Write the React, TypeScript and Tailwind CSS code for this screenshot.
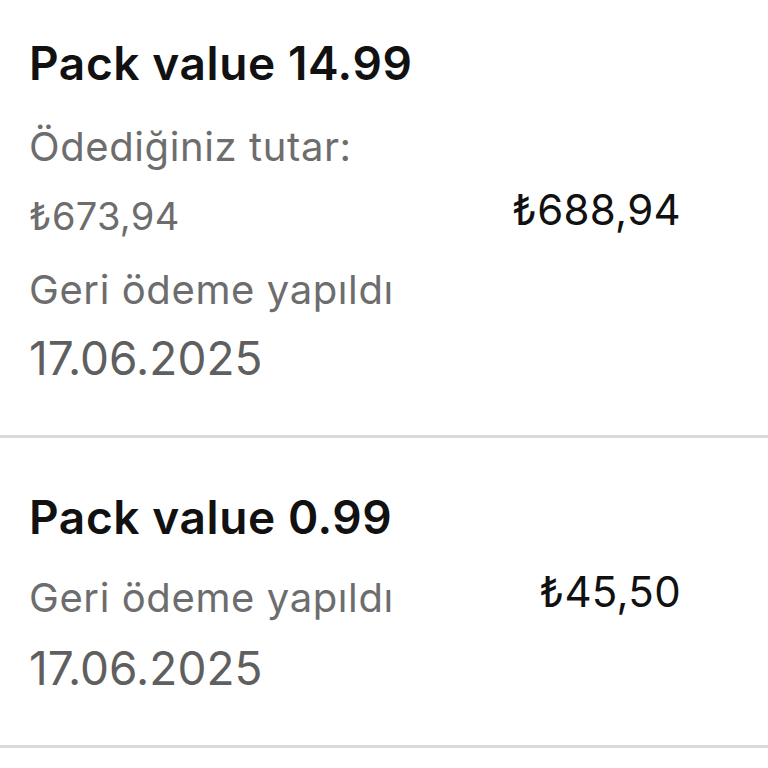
type Line = { text: string; size: 'lg' | 'sm'; mt: string }

const items: { title: string; lines: Line[]; dateMt: string; date: string; amount: string }[] = [
  {
    title: 'Pack value 14.99',
    lines: [
      { text: 'Ödediğiniz tutar:', size: 'lg', mt: 'mt-[30px]' },
      { text: '₺673,94', size: 'sm', mt: 'mt-[21px]' },
      { text: 'Geri ödeme yapıldı', size: 'lg', mt: 'mt-[26px]' },
    ],
    dateMt: 'mt-[16px]',
    date: '17.06.2025',
    amount: '₺688,94',
  },
  {
    title: 'Pack value 0.99',
    lines: [{ text: 'Geri ödeme yapıldı', size: 'lg', mt: 'mt-[27px]' }],
    dateMt: 'mt-[18px]',
    date: '17.06.2025',
    amount: '₺45,50',
  },
]

function RefundRow({ title, lines, dateMt, date, amount }: (typeof items)[number]) {
  return (
    <div className="flex items-center justify-between border-b-[3px] border-[#dadada] pl-[29px] pr-[87px] pt-[49px] pb-[49px]">
      <div className="flex flex-col">
        <div className="text-[46px] leading-[60px] font-semibold tracking-[0.6px] text-[#111]">{title}</div>
        {lines.map((l, i) => (
          <div
            key={i}
            className={
              l.size === 'lg'
                ? `text-[40px] leading-[48px] tracking-[0.6px] text-[#6d6d6d] ${l.mt}`
                : `text-[38px] leading-[48px] tracking-[0.3px] text-[#6d6d6d] ${l.mt}`
            }
          >
            {l.text}
          </div>
        ))}
        <div className={`text-[46px] leading-[56px] text-[#5f5f5f] ${dateMt}`}>{date}</div>
      </div>
      <div className="text-[42px] leading-[48px] tracking-[0.3px] text-[#111]">{amount}</div>
    </div>
  )
}

export default function App() {
  return (
    <div
      className="h-[768px] w-[768px] overflow-hidden bg-white"
      style={{ fontFamily: 'Inter, "Open Sans", "DejaVu Sans", sans-serif' }}
    >
      <div className="-mt-[16px]">
        {items.map((it, i) => (
          <RefundRow key={i} {...it} />
        ))}
      </div>
    </div>
  )
}
